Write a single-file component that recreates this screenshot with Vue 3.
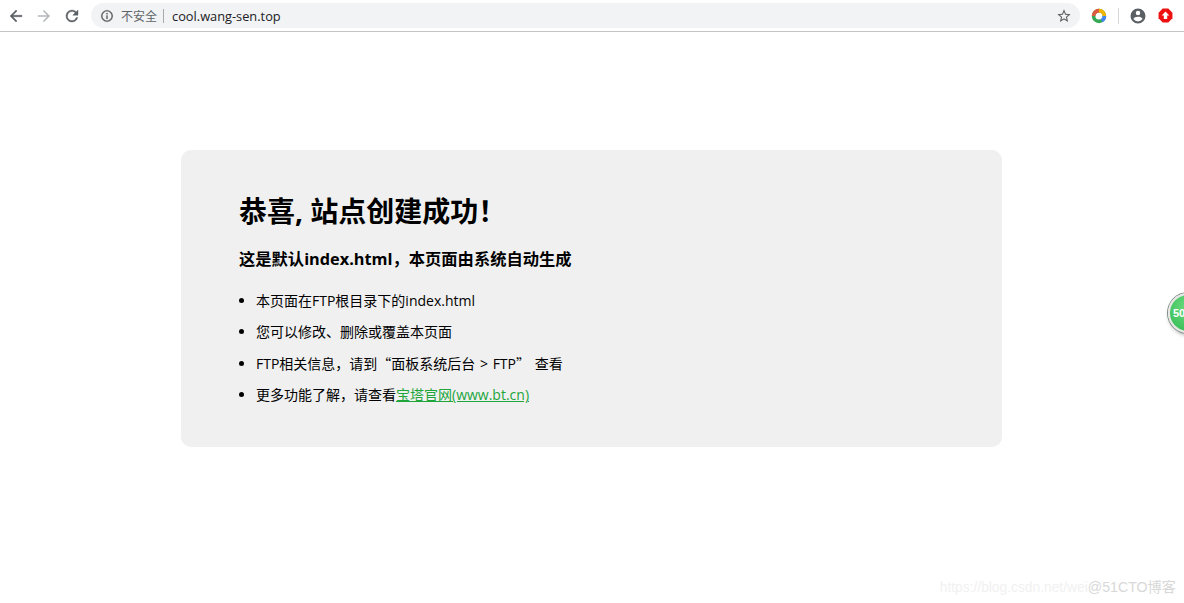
<script setup>
const items = [
  '本页面在FTP根目录下的index.html',
  '您可以修改、删除或覆盖本页面'
]
</script>

<template>
  <div class="page">
    <header class="toolbar">
      <div class="nav">
        <svg class="ic" viewBox="0 0 24 24" width="18" height="18"><path fill="#5a5f63" stroke="#5a5f63" stroke-width=".5" d="M20 11H7.83l5.59-5.59L12 4l-8 8 8 8 1.41-1.41L7.83 13H20z"/></svg>
        <svg class="ic" viewBox="0 0 24 24" width="18" height="18"><path fill="#b4b7ba" d="M4 11h12.17l-5.59-5.59L12 4l8 8-8 8-1.41-1.41L16.17 13H4z"/></svg>
        <svg class="ic" viewBox="0 0 24 24" width="18" height="18"><path fill="#5a5f63" stroke="#5a5f63" stroke-width=".5" d="M17.65 6.35A7.96 7.96 0 0 0 12 4a8 8 0 1 0 7.73 10h-2.08A6 6 0 1 1 12 6c1.66 0 3.14.69 4.22 1.78L13 11h7V4z"/></svg>
      </div>
      <div class="omnibox">
        <svg viewBox="0 0 24 24" width="14" height="14"><path fill="#5a5f63" stroke="#5a5f63" stroke-width=".5" d="M11 7h2v2h-2zm0 4h2v6h-2zm1-9a10 10 0 1 0 0 20 10 10 0 0 0 0-20zm0 18a8 8 0 1 1 0-16 8 8 0 0 1 0 16z"/></svg>
        <span class="insecure">不安全</span>
        <span class="sep"></span>
        <span class="url">cool.wang-sen.top</span>
        <svg class="star" viewBox="0 0 24 24" width="16" height="16"><path fill="#5a5f63" d="M22 9.24l-7.19-.62L12 2 9.19 8.63 2 9.24l5.46 4.73L5.82 21 12 17.27 18.18 21l-1.63-7.03zM12 15.4l-3.76 2.27 1-4.28-3.32-2.88 4.38-.38L12 6.1l1.71 4.04 4.38.38-3.32 2.88 1 4.28z"/></svg>
      </div>
      <svg class="ring" viewBox="0 0 16 16" width="16" height="16">
        <circle cx="8" cy="8" r="5.4" fill="none" stroke="#34a853" stroke-width="3.6"/>
        <path d="M8 2.6A5.4 5.4 0 0 1 13.4 8" fill="none" stroke="#f4b400" stroke-width="3.6"/>
        <path d="M3.3 5.3A5.4 5.4 0 0 1 8 2.6" fill="none" stroke="#e2583e" stroke-width="3.6"/>
        <path d="M2.6 8a5.4 5.4 0 0 1 .7-2.7" fill="none" stroke="#e2583e" stroke-width="3.6"/>
        <path d="M13.4 8A5.4 5.4 0 0 1 10.7 12.7" fill="none" stroke="#4285f4" stroke-width="3.6"/>
      </svg>
      <span class="tsep"></span>
      <svg class="account" viewBox="0 0 24 24" width="18" height="18"><path fill="#5a5f63" d="M12 2a10 10 0 1 0 0 20 10 10 0 0 0 0-20zm0 3a3 3 0 1 1 0 6 3 3 0 0 1 0-6zm0 14.2a7.2 7.2 0 0 1-6-3.22c.03-1.99 4-3.08 6-3.08s5.97 1.09 6 3.08a7.2 7.2 0 0 1-6 3.22z"/></svg>
      <svg class="ext" viewBox="0 0 16 16" width="15" height="15">
        <path fill="#ee1111" d="M5 .6h6L15.4 5v6L11 15.4H5L.6 11V5z"/>
        <path fill="#fff" d="M8 3.6 12 8H9.8v3.6H6.2V8H4z"/>
      </svg>
    </header>

    <main class="main">
      <section class="panel">
        <h1>恭喜, 站点创建成功！</h1>
        <h3>这是默认index.html，本页面由系统自动生成</h3>
        <ul>
          <li v-for="item in items" :key="item">{{ item }}</li>
          <li class="spaced">FTP相关信息，请到<span class="cjk">“</span>面板系统后台 &gt; FTP<span class="cjk">”</span> 查看</li>
          <li>更多功能了解，请查看<a href="#">宝塔官网(www.bt.cn)</a></li>
        </ul>
      </section>
    </main>

    <div class="badge"><span>50</span></div>
    <div class="watermark"><span class="w1">https://blog.csdn.net/wei</span><span class="w2">@51CTO博客</span></div>
  </div>
</template>

<style scoped>
.page {
  position: relative;
  width: 1184px;
  height: 603px;
  overflow: hidden;
  background: #fff;
  font-family: "Open Sans", "Noto Sans CJK SC", sans-serif;
  color: #000;
}
.toolbar {
  height: 32px;
  box-sizing: border-box;
  border-bottom: 1px solid #c4c4c4;
  display: flex;
  align-items: center;
  padding-left: 7px;
  background: #fff;
}
.nav {
  display: flex;
  gap: 10px;
  width: 84px;
  flex: none;
}
.omnibox {
  width: 989px;
  height: 25px;
  flex: none;
  box-sizing: border-box;
  border-radius: 13px;
  background: #f1f3f4;
  display: flex;
  align-items: center;
  padding: 0 8px 0 9px;
}
.insecure {
  font-size: 12px;
  color: #5f6368;
  margin-left: 7px;
}
.sep {
  width: 1px;
  height: 14px;
  background: #a8abae;
  margin: 0 8px 0 6px;
}
.url {
  font-size: 12.8px;
  color: #202124;
}
.star { margin-left: auto; }
.ring { margin-left: 11px; flex: none; }
.tsep { width: 1px; height: 16px; background: #d5d7d9; margin-left: 11px; flex: none; }
.account { margin-left: 10px; flex: none; }
.ext { margin-left: 11px; flex: none; }

.main { padding: 118px 182px 0 181px; }
.panel {
  height: 297px;
  box-sizing: border-box;
  background: #f0f0f0;
  border-radius: 10px;
  padding: 41px 58px 0;
}
h1 {
  margin: 0;
  font-size: 28px;
  line-height: 40px;
  font-weight: 700;
}
h3 {
  margin: 16px 0 0;
  font-size: 16.3px;
  line-height: 24px;
  font-weight: 700;
}
ul {
  margin: 19.5px 0 0;
  padding: 0 0 0 17px;
  list-style: disc;
}
li {
  font-size: 14px;
  line-height: 20px;
  margin-bottom: 11.3px;
}
.spaced { word-spacing: 1px; }
.cjk { font-family: "Noto Sans CJK SC", sans-serif; }
a { color: #20a53a; text-decoration: underline; }

.badge {
  position: absolute;
  left: 1168px;
  top: 293px;
  width: 40px;
  height: 40px;
  box-sizing: border-box;
  border-radius: 50%;
  border: 2px solid #e6e8e6;
  background: radial-gradient(circle at 50% 35%, #6fdc82, #2fb84f);
  box-shadow: 0 0 0 1px #7d8a80, 1px 2px 4px rgba(0,0,0,.35);
  color: #fff;
  font: 700 11px/36px "Liberation Sans", sans-serif;
  padding-left: 3px;
}
.watermark {
  position: absolute;
  right: 8px;
  top: 578px;
  line-height: 18px;
  font-family: "Liberation Sans", "Noto Sans CJK SC", sans-serif;
  white-space: nowrap;
}
.w1 { color: #f1f1f1; font-size: 13.8px; }
.w2 { color: #d8d8d8; font-size: 14.2px; }
</style>

<style>
html, body { margin: 0; background: #fff; }
</style>
